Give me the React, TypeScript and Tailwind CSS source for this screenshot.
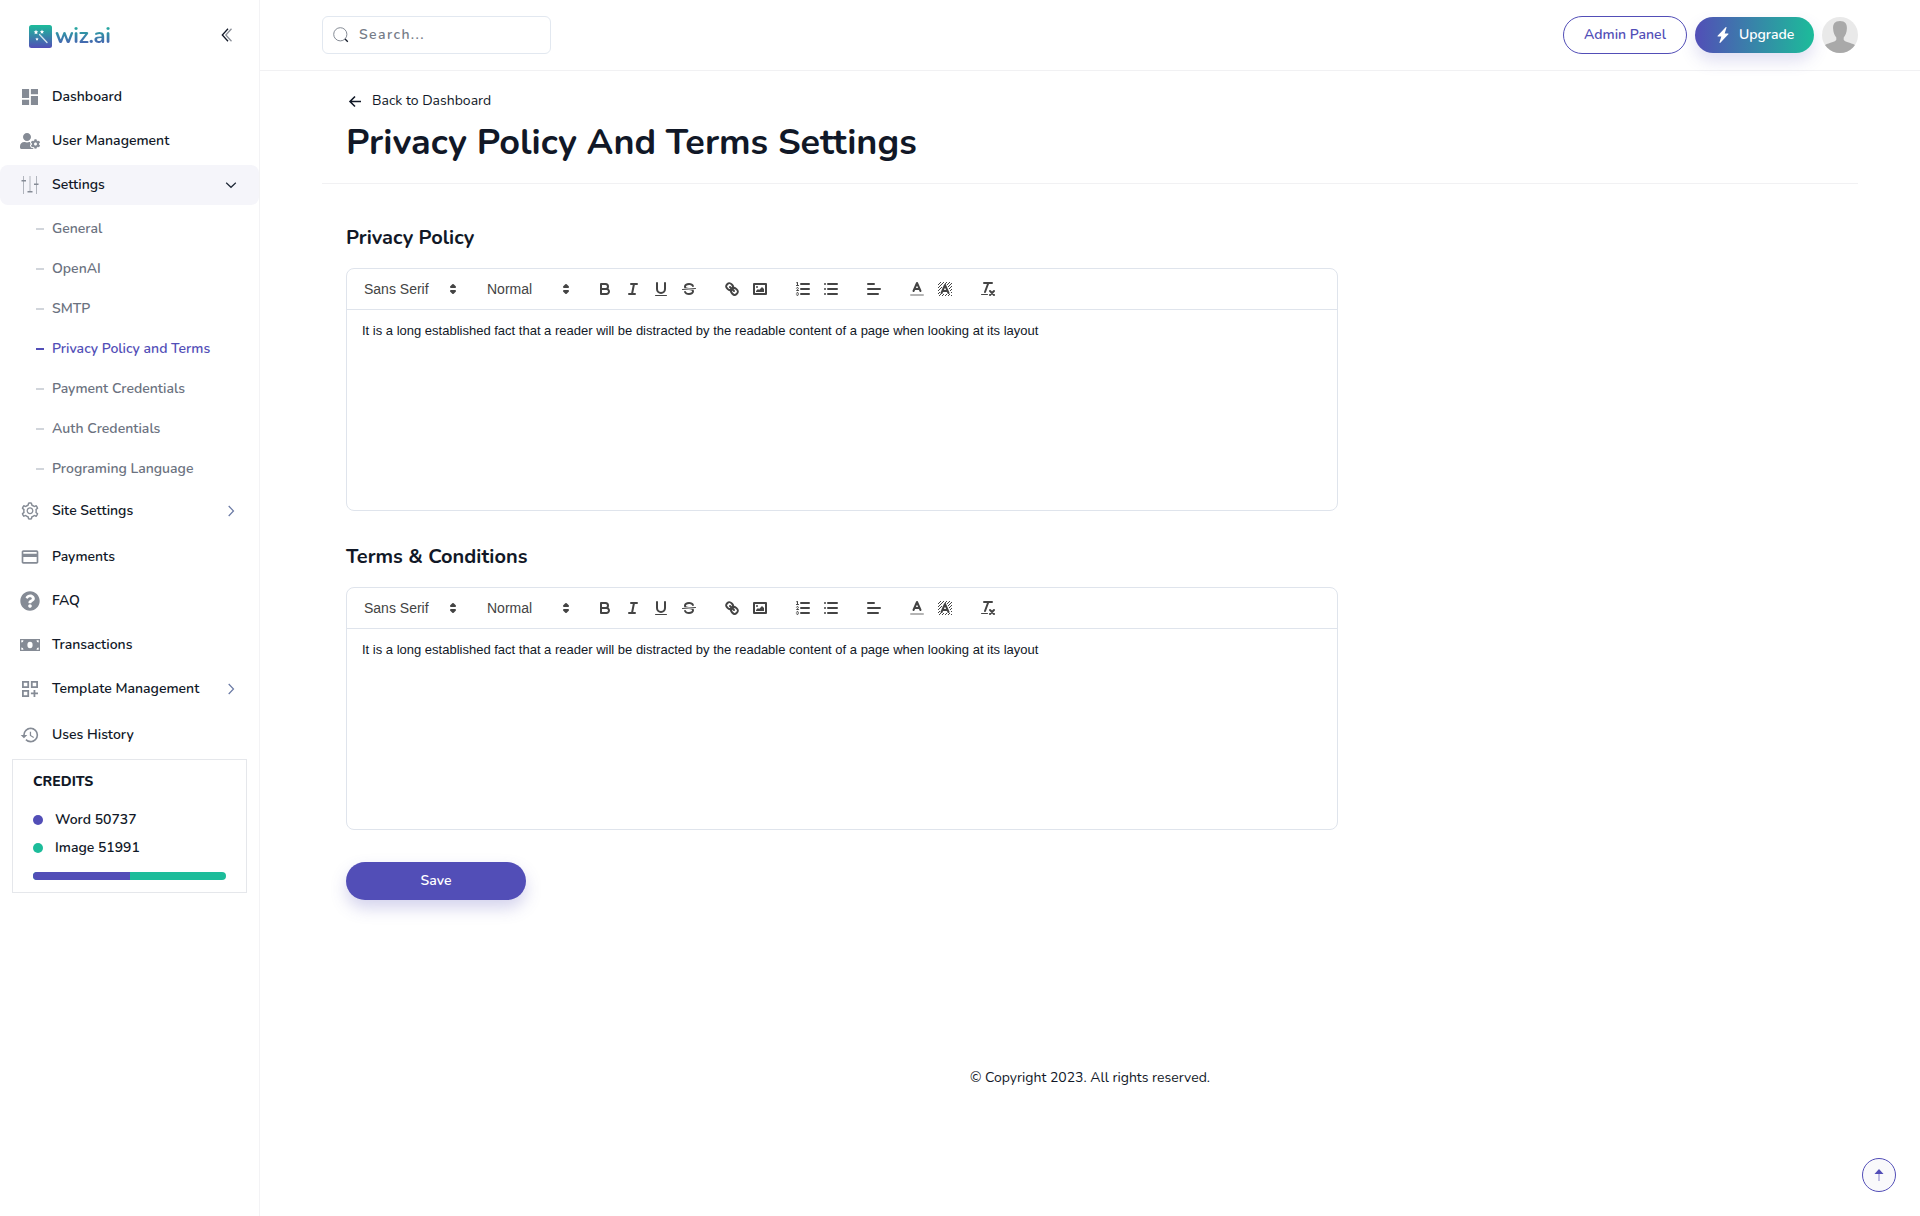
import React from "react";
import { MdDashboard, MdHistory, MdOutlineDashboardCustomize, MdPayment } from "react-icons/md";
import { FaQuestionCircle, FaUserCog } from "react-icons/fa";
import { AiOutlineSetting } from "react-icons/ai";
import { BsLightningChargeFill } from "react-icons/bs";

const BODY_TEXT =
  "It is a long established fact that a reader will be distracted by the readable content of a page when looking at its layout";

function Logo() {
  return (
    <div className="mt-px flex items-center">
      <svg width="23" height="23" viewBox="0 0 23 23">
        <defs>
          <linearGradient id="logo-bg" x1="0" y1="0" x2="0" y2="1">
            <stop offset="0" stopColor="#1cbc9a" />
            <stop offset="1" stopColor="#524eb7" />
          </linearGradient>
        </defs>
        <rect width="23" height="23" rx="2.5" fill="url(#logo-bg)" />
        <path d="M10.500 9.500 18 17.500" stroke="#d5e6ee" strokeWidth="1.3" strokeLinecap="round" />
        <path
          d="M7 4.8 7.7 6.3 9.3 6.5 8.1 7.6 8.4 9.2 7 8.4 5.6 9.2 5.9 7.6 4.7 6.5 6.3 6.3ZM13 4.6 13.6 6 15.1 6.2 14 7.2 14.3 8.7 13 8 11.7 8.7 12 7.2 10.9 6.2 12.4 6ZM8 12.4 8.5 13.4 9.6 13.6 8.8 14.4 9 15.5 8 15 7 15.5 7.2 14.4 6.4 13.6 7.5 13.4Z"
          fill="#fff"
        />
      </svg>
      <span className="ml-[3px] bg-[linear-gradient(180deg,#1cbc9a,#524eb7)] bg-clip-text font-[Nunito,Lato,sans-serif] text-[22px] leading-[26px] font-bold tracking-[-0.4px] text-transparent">
        wiz.ai
      </span>
    </div>
  );
}

function SlidersIcon() {
  return (
    <svg width="20" height="20" viewBox="0 0 20 20" fill="#858b95">
      <g opacity=".6">
        <rect x="3" y="1" width="1" height="18" />
        <rect x="16" y="1" width="1" height="18" />
      </g>
      <rect x="9" y="1" width="2" height="16" opacity=".3" />
      <rect x="1.5" y="5" width="4.500" height="1.500" />
      <rect x="7.500" y="16" width="5" height="1.500" />
      <rect x="14" y="8.500" width="4.500" height="1.500" />
    </svg>
  );
}

function CashIcon() {
  return (
    <svg width="20" height="20" viewBox="0 0 20 20">
      <rect y="4" width="20" height="12" fill="#858b95" />
      <g fill="#fff">
        <ellipse cx="10" cy="10" rx="2.600" ry="3.200" />
        <path d="M1.300 5.300h2.200a2.200 2.200 0 0 1-2.200 2.200ZM18.700 5.300v2.200a2.200 2.200 0 0 1-2.200-2.200ZM1.300 14.700v-2.200a2.200 2.200 0 0 1 2.200 2.200ZM18.700 14.700h-2.200a2.200 2.200 0 0 1 2.200-2.200Z" />
      </g>
    </svg>
  );
}

function Chevron({ down = false }: { down?: boolean }) {
  return down ? (
    <svg width="12" height="12" viewBox="0 0 12 12" fill="none" stroke="#1f2937" strokeWidth="1.2">
      <path d="M1.200 3.700 6 8.300 10.800 3.700" />
    </svg>
  ) : (
    <svg width="12" height="12" viewBox="0 0 12 12" fill="none" stroke="#6b7aa5" strokeWidth="1.200">
      <path d="M3.700 1 8.500 6 3.700 11" />
    </svg>
  );
}

function NavItem({
  icon,
  label,
  chevron,
  active = false,
}: {
  icon: React.ReactNode;
  label: string;
  chevron?: "down" | "right";
  active?: boolean;
}) {
  return (
    <a
      className={`flex h-10 shrink-0 items-center rounded-lg pr-[22px] pl-5 text-[#111827] ${active ? "bg-[#f5f5fa]" : ""}`}
    >
      <span className="flex w-5 justify-center text-[#858b95] [&>svg]:shrink-0">{icon}</span>
      <span className="ml-3 flex-1 font-semibold">{label}</span>
      {chevron && <Chevron down={chevron === "down"} />}
    </a>
  );
}

function SubItem({ label, active = false }: { label: string; active?: boolean }) {
  return (
    <a className={`flex h-10 items-center pl-9 font-semibold ${active ? "text-[#524eb7]" : "text-[#6b7280]"}`}>
      <span className={`mr-2 h-0.5 w-2 ${active ? "bg-[#524eb7]" : "bg-[#d1d5db]"}`} />
      {label}
    </a>
  );
}

function Sidebar() {
  return (
    <aside className="flex w-[260px] shrink-0 flex-col border-r border-[#f3f3f5]">
      <div className="flex h-[71px] items-center justify-between pr-[26px] pl-[29px]">
        <Logo />
        <svg width="12" height="14" viewBox="0 0 12 14" fill="none" strokeWidth="1.300" className="-mt-0.5">
          <path d="M10.500.800 4.800 7 10.500 13.200" stroke="#8b8f98" />
          <path d="M7 .800 1.300 7 7 13.200" stroke="#111827" />
        </svg>
      </div>
      <nav className="flex flex-col pt-1.5">
        <div className="flex flex-col gap-1">
          <NavItem icon={<MdDashboard size={20} viewBox="0.75 0.75 22.5 22.5" />} label="Dashboard" />
          <NavItem icon={<FaUserCog size={20} />} label="User Management" />
          <NavItem icon={<SlidersIcon />} label="Settings" chevron="down" active />
        </div>
        <div className="flex flex-col pt-1">
          <SubItem label="General" />
          <SubItem label="OpenAI" />
          <SubItem label="SMTP" />
          <SubItem label="Privacy Policy and Terms" active />
          <SubItem label="Payment Credentials" />
          <SubItem label="Auth Credentials" />
          <SubItem label="Programing Language" />
        </div>
        <div className="flex flex-col gap-1 pt-0.5">
          <NavItem icon={<AiOutlineSetting size={20} />} label="Site Settings" chevron="right" />
          <div className="mt-0.5 flex flex-col gap-1">
            <NavItem icon={<MdPayment size={20} />} label="Payments" />
            <NavItem icon={<FaQuestionCircle size={20} />} label="FAQ" />
            <NavItem icon={<CashIcon />} label="Transactions" />
            <NavItem
              icon={<MdOutlineDashboardCustomize size={20} viewBox="0.75 0.75 22.5 22.5" />}
              label="Template Management"
              chevron="right"
            />
          </div>
          <div className="mt-0.5 flex flex-col">
            <NavItem icon={<MdHistory size={20} viewBox="0.2 0 24 24" />} label="Uses History" />
          </div>
        </div>
      </nav>
      <section className="mx-3 mt-1 h-[134px] border border-[#e5e7eb] px-5 pt-3 text-[#111827]">
        <h3 className="font-extrabold">CREDITS</h3>
        <div className="mt-[18px] flex h-5 items-center gap-3">
          <span className="h-2.5 w-2.5 rounded-full bg-[#524eb7]" />
          <span className="font-semibold">Word 50737</span>
        </div>
        <div className="mt-2 flex h-5 items-center gap-3">
          <span className="h-2.5 w-2.5 rounded-full bg-[#1cbc9a]" />
          <span className="font-semibold">Image 51991</span>
        </div>
        <div className="mt-3.5 flex h-2 overflow-hidden rounded-full bg-[#1cbc9a]">
          <span className="w-[97px] bg-[#524eb7]" />
        </div>
      </section>
    </aside>
  );
}

function Avatar() {
  return (
    <svg width="36" height="36" viewBox="0 0 36 36" className="rounded-full bg-[#e9e9e9]">
      <path
        d="M18 4c5.200 0 7.200 3 6.900 7.500-.100 3.800-1.500 6.900-3.200 9v2.300c1 2.300 6.500 2.700 11.300 5.200V36H3v-8c4.800-2.500 10.300-2.900 11.300-5.200v-2.300c-1.700-2.100-3.100-5.200-3.200-9C10.800 7 12.800 4 18 4Z"
        fill="#a9a9a9"
      />
    </svg>
  );
}

function Header() {
  return (
    <header className="flex h-[71px] items-center justify-between border-b border-[#f1f1f3] px-[62px]">
      <label className="flex h-[38px] w-[229px] items-center rounded-md border border-[#e2e8f0] pl-2.5">
        <svg width="16" height="16" viewBox="0 0 16 16" fill="none">
          <circle cx="7.300" cy="7.300" r="6.600" stroke="#858b95" />
          <path d="m12 12 2.800 2.800" stroke="#111827" strokeWidth="1.300" />
        </svg>
        <span className="ml-2.5 font-semibold tracking-[1.4px] text-[#757b87]">Search...</span>
      </label>
      <div className="flex items-center gap-2">
        <button className="h-[38px] w-[124px] rounded-full border border-[#524eb7] font-semibold text-[#524eb7]">
          Admin Panel
        </button>
        <button className="flex h-9 w-[119px] items-center rounded-full bg-[linear-gradient(90deg,#524eb7,#1cbc9a)] pl-5 font-semibold text-white shadow-[0_8px_16px_rgba(82,78,183,0.18)]">
          <BsLightningChargeFill size={16} />
          <span className="ml-2">Upgrade</span>
        </button>
        <Avatar />
      </div>
    </header>
  );
}

function Tool({ children }: { children: React.ReactNode }) {
  return (
    <button className="h-6 w-7 px-[5px] py-[3px]">
      <svg
        viewBox="0 0 18 18"
        className="h-[18px] w-[18px]"
        fill="none"
        stroke="#444"
        strokeWidth="2"
        strokeLinecap="round"
        strokeLinejoin="round"
      >
        {children}
      </svg>
    </button>
  );
}

function Picker({ label, wide = false }: { label: string; wide?: boolean }) {
  return (
    <div
      className={`flex h-6 items-center justify-between border border-transparent pl-2 text-[14px] font-medium text-[#444] ${wide ? "w-[108px]" : "w-[98px]"}`}
    >
      <span>{label}</span>
      <svg viewBox="0 0 18 18" className="h-[18px] w-[18px]" fill="#444" stroke="#444" strokeWidth="2" strokeLinecap="round" strokeLinejoin="round">
        <polygon points="7 11 9 13 11 11 7 11" />
        <polygon points="7 7 9 5 11 7 7 7" />
      </svg>
    </div>
  );
}

/* Hatched swatch behind the letter of the background-colour tool. */
const DITHER: [number, number][] = [];
for (let y = 2; y < 16; y++) {
  for (let x = 2; x < 16; x++) {
    const nearLetter = Math.abs(x - 8.5) < (y - 3) * 0.45 + 1.2 && y > 3 && y < 14;
    if ((x + y) % 3 === 0 && !nearLetter) DITHER.push([x, y]);
  }
}

function Toolbar() {
  return (
    <div className="flex gap-[15px] border-b border-[#dfe4ec] p-2 font-['Liberation_Sans',Helvetica,sans-serif]">
      <Picker label="Sans Serif" wide />
      <Picker label="Normal" />
      <div className="flex">
        <Tool>
          <path d="M5,4H9.5A2.5,2.5,0,0,1,12,6.5v0A2.5,2.5,0,0,1,9.5,9H5A0,0,0,0,1,5,9V4A0,0,0,0,1,5,4Z" />
          <path d="M5,9h5.5A2.5,2.5,0,0,1,13,11.5v0A2.5,2.5,0,0,1,10.5,14H5a0,0,0,0,1,0,0V9A0,0,0,0,1,5,9Z" />
        </Tool>
        <Tool>
          <path d="M7 4h6M5 14h6M8 14 10 4" />
        </Tool>
        <Tool>
          <path d="M5,3V9a4.012,4.012,0,0,0,4,4H9a4.012,4.012,0,0,0,4-4V3" />
          <rect x="3" y="15" width="12" height="1" rx=".5" fill="#444" stroke="none" />
        </Tool>
        <Tool>
          <path d="M15.500 8.500 2.500 9.500" strokeWidth="1" />
          <g fill="#444" stroke="none">
            <path d="M9.007,8C6.542,7.791,6,7.519,6,6.5,6,5.792,7.283,5,9,5c1.571,0,2.765.679,2.969,1.309a1,1,0,0,0,1.9-.617C13.356,4.106,11.354,3,9,3,6.2,3,4,4.538,4,6.5a3.2,3.2,0,0,0,.5,1.843Z" />
            <path d="M8.984,10C11.457,10.208,12,10.479,12,11.5c0,0.708-1.283,1.5-3,1.5-1.571,0-2.765-.679-2.969-1.309a1,1,0,1,0-1.9.617C4.644,13.894,6.646,15,9,15c2.8,0,5-1.538,5-3.5a3.2,3.2,0,0,0-.5-1.843Z" />
          </g>
        </Tool>
      </div>
      <div className="flex">
        <Tool>
          <path d="M7 7 11 11" />
          <path d="M8.9,4.577a3.476,3.476,0,0,1,.36,4.679A3.476,3.476,0,0,1,4.577,8.9C3.185,7.5,2.035,6.4,4.217,4.217S7.5,3.185,8.9,4.577Z" />
          <path d="M13.423,9.1a3.476,3.476,0,0,0-4.679-.36,3.476,3.476,0,0,0,.36,4.679c1.392,1.392,2.5,2.542,4.679.36S14.815,10.5,13.423,9.1Z" />
        </Tool>
        <Tool>
          <rect x="3" y="4" width="12" height="10" />
          <g fill="#444" stroke="none">
            <circle cx="6" cy="7" r="1" />
            <polygon points="5 12 5 11 7 9 8 10 11 7 13 9 13 12 5 12" />
          </g>
        </Tool>
      </div>
      <div className="flex">
        <Tool>
          <path d="M7 4h8M7 9h8M7 14h8" />
          <path
            d="M3.5,6A0.5,0.5,0,0,1,3,5.5V3.085l-0.276.138A0.5,0.5,0,0,1,2.053,3c-0.124-.247-0.023-0.324.224-0.447l1-.5A0.5,0.5,0,0,1,4,2.5v3A0.5,0.5,0,0,1,3.5,6Z"
            fill="#444"
            stroke="none"
          />
          <g strokeWidth="1">
            <path d="M2.500 5.500h2M4.5,10.5h-2c0-.234,1.85-1.076,1.85-2.234A0.959,0.959,0,0,0,2.5,8.156" />
            <path d="M2.5,14.846a0.959,0.959,0,0,0,1.85-.109A0.7,0.7,0,0,0,3.75,14a0.688,0.688,0,0,0,.6-0.736,0.959,0.959,0,0,0-1.85-.109" />
          </g>
        </Tool>
        <Tool>
          <path d="M6 4h9M6 9h9M6 14h9M3 4h0M3 9h0M3 14h0" />
        </Tool>
      </div>
      <Tool>
        <path d="M3 9h12M3 14h10M3 4h6" />
      </Tool>
      <div className="flex">
        <Tool>
          <path d="M3 15h12" opacity=".4" />
          <path d="M5.500 11 9 3 12.500 11M11.630 9H6.380" />
        </Tool>
        <Tool>
          <g fill="#444" stroke="none">
            {DITHER.map(([x, y]) => (
              <rect key={`${x}-${y}`} x={x} y={y} width="1" height="1" />
            ))}
          </g>
          <path d="M5.500 13 9 5 12.500 13M11.630 11H6.380" />
        </Tool>
      </div>
      <Tool>
        <path d="M5 3h8M6 12 9.350 3M11 11l4 4M15 11l-4 4" />
        <rect x="2" y="14" width="7" height="1" rx=".5" fill="#444" stroke="none" />
      </Tool>
    </div>
  );
}

function EditorField({ title }: { title: string }) {
  return (
    <section>
      <h2 className="text-xl leading-7 font-bold text-[#111827]">{title}</h2>
      <div className="mt-4 h-[243px] w-[992px] rounded-lg border border-[#dfe4ec]">
        <Toolbar />
        <p className="px-[15px] pt-3 font-['Liberation_Sans',Helvetica,sans-serif] text-[13px] leading-[18px] text-[#111827]">
          {BODY_TEXT}
        </p>
      </div>
    </section>
  );
}

export default function App() {
  return (
    <div className="flex h-[1216px] w-[1920px] bg-white font-[Nunito,Lato,sans-serif] text-sm leading-5 text-[#111827]">
      <Sidebar />
      <div className="flex min-w-0 flex-1 flex-col">
        <Header />
        <main className="px-[62px]">
          <div className="h-[113px] border-b border-[#f1f1f3] px-6 pt-5">
            <a className="flex items-center text-[#111827]">
              <svg width="18" height="18" viewBox="0 0 18 18" fill="none" stroke="#111827" strokeWidth="1.600">
                <path d="M15 9.500H4M9 4.500 4 9.500 9 14.500" />
              </svg>
              <span className="ml-2">Back to Dashboard</span>
            </a>
            <h1 className="mt-[9px] text-4xl leading-[45px] font-bold">Privacy Policy And Terms Settings</h1>
          </div>
          <div className="flex flex-col px-6 pt-10">
            <EditorField title="Privacy Policy" />
            <div className="mt-8">
              <EditorField title="Terms & Conditions" />
            </div>
            <button className="mt-8 h-[38px] w-[180px] rounded-full bg-[#524eb7] font-semibold text-white shadow-[0_8px_16px_rgba(82,78,183,0.25)]">
              Save
            </button>
          </div>
        </main>
        <footer className="mt-[168px] text-center text-[#111827]">© Copyright 2023. All rights reserved.</footer>
      </div>
      <button className="fixed right-6 bottom-6 flex h-[34px] w-[34px] items-center justify-center rounded-full border border-[#524eb7] bg-[#f9f9fb]">
        <svg width="10" height="12" viewBox="0 0 10 12" fill="#524eb7">
          <path d="M5 0 9.500 5h-9Z" />
          <rect x="4" y="5" width="2" height="7" opacity=".35" />
        </svg>
      </button>
    </div>
  );
}
